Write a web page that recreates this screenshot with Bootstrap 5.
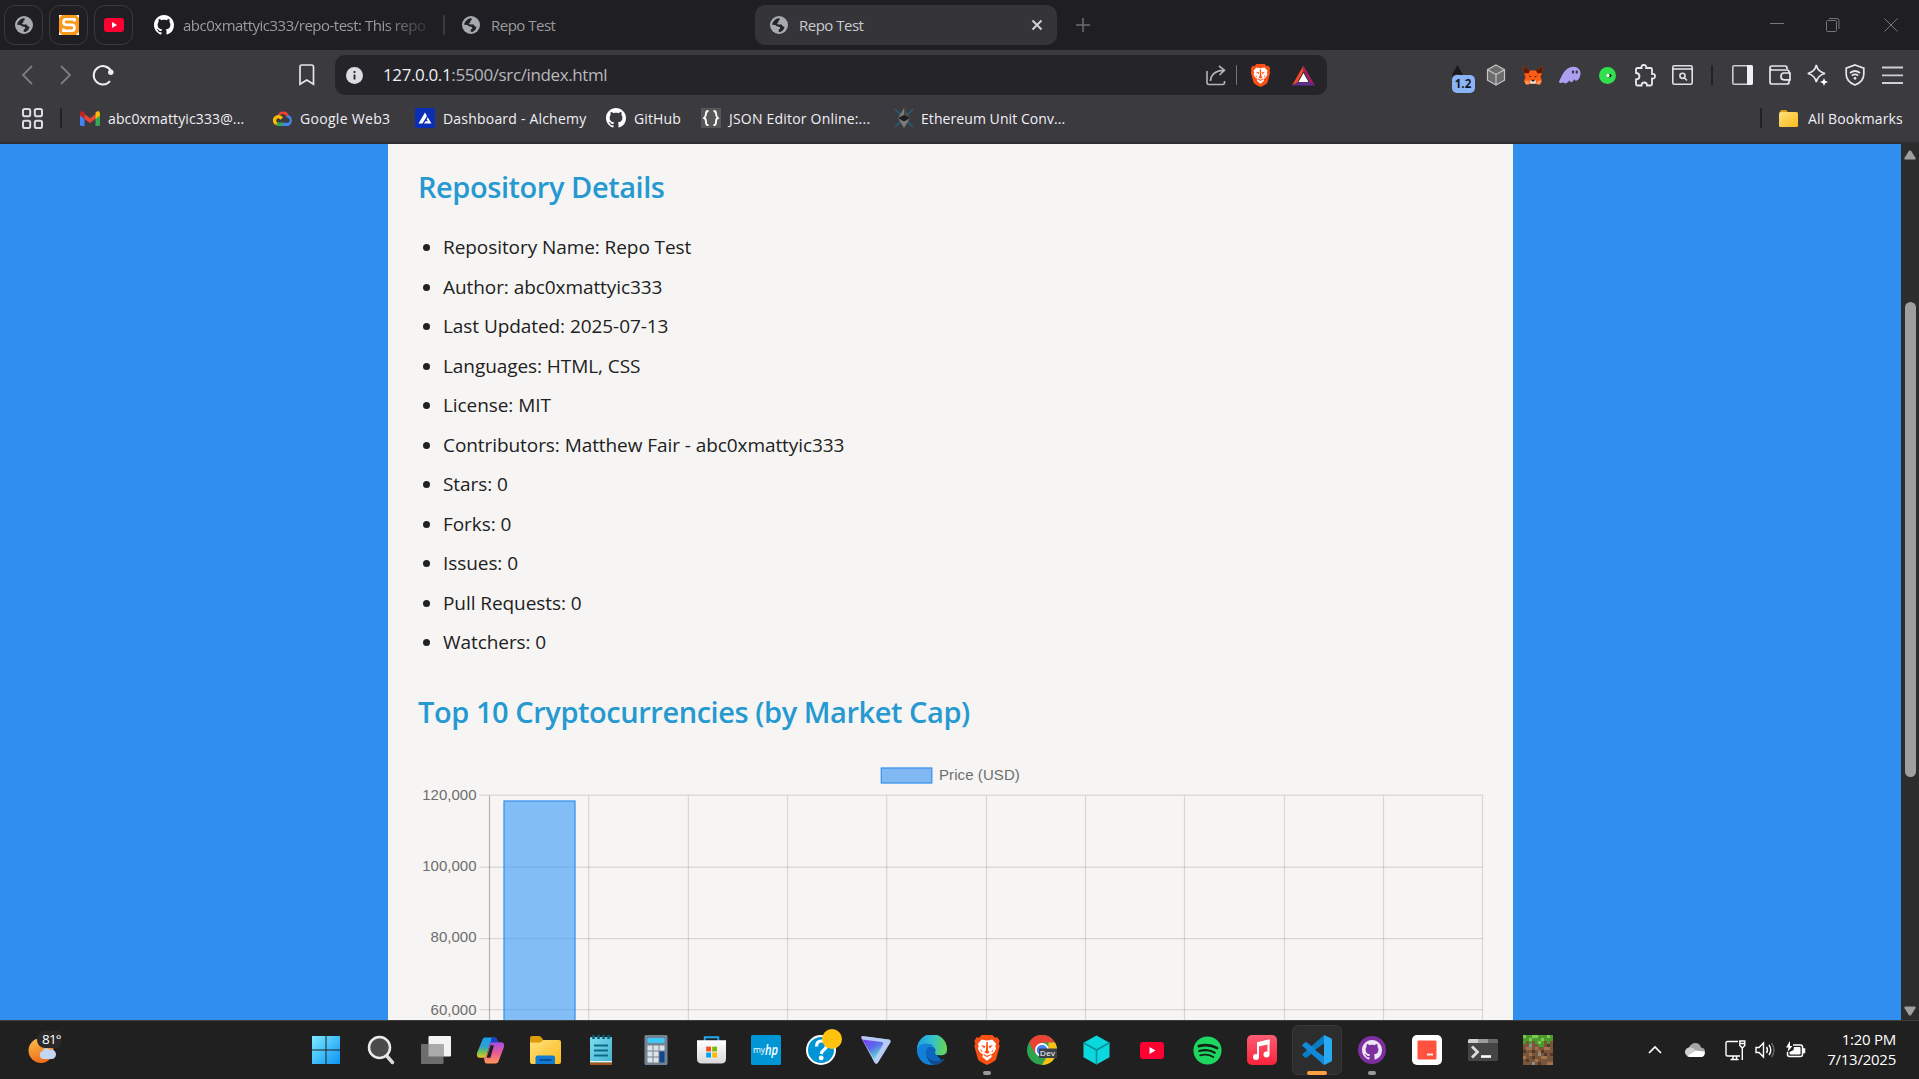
<!DOCTYPE html>
<html lang="en">
<head>
<meta charset="utf-8">
<title>Repo Test</title>
<link href="https://cdn.jsdelivr.net/npm/bootstrap@5.3.0/dist/css/bootstrap.min.css" rel="stylesheet">
<style>
html,body{height:100%}
body{font-family:"Open Sans","Noto Sans",sans-serif;background:#2f8eee;overflow:hidden;color:#212529}
svg{display:block;flex:none}
.tabstrip{height:50px;background:#1f1e23;padding:5px 0 0 4px}
.pin{width:39px;height:40px;border:1px solid #3a393f;border-radius:11px;margin-right:6px}
.tab-t{font-size:15px;line-height:39px;letter-spacing:-.5px;color:#9b9a9f;white-space:nowrap}
.tab-slot{height:40px}
.tab-on{width:302px;height:40px;border-radius:10px;background:#353439}
.tab-on .tab-t{color:#cbcacf}
.fade-r{-webkit-mask-image:linear-gradient(90deg,#000 200px,transparent 252px);mask-image:linear-gradient(90deg,#000 200px,transparent 252px)}
.vsep{width:2px;height:20px;border-radius:1px;background:#222126;flex:none}
.toolbar{height:50px;background:#3b3a3f}
.omnibox{width:992px;height:40px;border-radius:10px;background:#252429;color:#b9b8be;font-size:17px;letter-spacing:-.38px;white-space:nowrap}
.omnibox b{font-weight:400;color:#efeef4}
.ext{width:37.4px}
.ext-badge{left:12px;top:11px;width:23px;height:18px;border-radius:5px;background:#8ab4f8;color:#15161a;font-size:11.5px;font-weight:700;line-height:18px;text-align:center}
.bookbar{height:44px;background:#3b3a3f;border-bottom:2px solid #2e2d32;padding-bottom:6px;color:#f1f0f5;font-size:14px;letter-spacing:.12px;white-space:nowrap}
.bm{flex:none}
.page{height:876px;overflow:hidden}
.side{width:388px}
.sheet{width:1125px;background:#f6f5f4;padding:23px 25px 0 31px}
.sheet h2{font-size:29px;line-height:40px;font-weight:600;letter-spacing:-.44px;color:#2699d1;margin:0 0 21px -1px}
.sheet ul{margin:0 0 29px;padding-left:24px;font-size:19px;letter-spacing:-.07px;line-height:39.5px;color:#212121}
.scroller{width:18px;background:#2c2c2c;padding:6px 0 4px}
.thumb{width:11px;height:475px;border-radius:6px;background:#9f9f9f}
.taskbar{height:59px;background:#202020;border-top:1px solid #3e403e;color:#fff}
.task{width:55.1px;height:58px}
.task-on{width:50px;height:50px;border-radius:6px;background:#2d2d2d;border:1px solid #383838}
.run-dot{bottom:4px;left:50%;width:8px;height:4px;border-radius:2px;background:#9a9a9a;transform:translateX(-50%)}
.run-dot.wide{width:20px;background:#ff9f43}
.weather{width:298px;padding-left:28px}
.clock{font-size:15px;letter-spacing:-.25px;line-height:20px;width:90px;padding-bottom:3px}
.temp{font-size:13.5px;letter-spacing:-.8px;line-height:17px;left:37px;top:-6px;width:24px;background:#292929;border-radius:8px 4px 4px 8px;padding-left:5px}
</style>
</head>
<body class="d-flex flex-column m-0">
<svg width="0" height="0" class="position-absolute">
<symbol id="gh" viewBox="0 0 16 16"><path d="M8 0C3.58 0 0 3.58 0 8c0 3.54 2.29 6.53 5.47 7.59.4.07.55-.17.55-.38 0-.19-.01-.82-.01-1.49-2.01.37-2.53-.49-2.69-.94-.09-.23-.48-.94-.82-1.13-.28-.15-.68-.52-.01-.53.63-.01 1.08.58 1.23.82.72 1.21 1.87.87 2.33.66.07-.52.28-.87.51-1.07-1.78-.2-3.64-.89-3.64-3.95 0-.87.31-1.59.82-2.15-.08-.2-.36-1.02.08-2.12 0 0 .67-.21 2.2.82.64-.18 1.32-.27 2-.27s1.36.09 2 .27c1.53-1.04 2.2-.82 2.2-.82.44 1.1.16 1.92.08 2.12.51.56.82 1.27.82 2.15 0 3.07-1.87 3.75-3.65 3.95.29.25.54.73.54 1.48 0 1.07-.01 1.93-.01 2.2 0 .21.15.46.55.38A8.01 8.01 0 0 0 16 8c0-4.42-3.58-8-8-8z"/></symbol>
<symbol id="globe" viewBox="0 0 18 18"><circle cx="9" cy="9" r="9" fill="#a6aab0"/><path d="M3.600 5.200Q5.500 2.400 9.300 2.100L9.800 4 8.200 5 8.600 6.300 7 7.200Q7.200 8.600 9 8.400l2.600.2 1.200 1.700 1.800.8Q14.200 14 10.600 15.900l-2-.1.2-2.200 1.500-1-.4-1.600-2.300-.5Q6 9.600 5.200 8.900L2.100 8.800Q2.200 6.800 3.600 5.200Z" fill="#232227"/></symbol>
<symbol id="brave" viewBox="0 0 24 28"><path d="M7 0h10l2.500 2.600 2.200-.4L23.800 5.500 23 8l.8 2.400-3.400 12.400Q19.500 24.500 12 28 4.500 24.500 3.600 22.800L.2 10.400 1 8 .2 5.500 2.300 2.200l2.200.4z" fill="#fb4f14"/><path d="M7 4.300l5 .8 5-.8 3.500 3.800-.8 2.400.8 2.300-1.900 3.200-2.800 2.300.6 2.200L12 24l-4.400-3.500.6-2.200-2.800-2.300-1.900-3.200.8-2.300-.8-2.400z" fill="#fff"/><path d="M6.500 9.300l4 1-1 2.200zM17.500 9.300l-4 1 1 2.200zM11.300 6.500h1.400l.3 8 1.600 1.500L12 17.500 9.400 16l1.600-1.500zM8.500 17.400l3.500 1.900 3.500-1.900-.5 1.500-3 1.900-3-1.900zM5.500 12.500l2.500 3-1 .3zM18.500 12.500l-2.500 3 1 .3z" fill="#fb4f14"/></symbol>
<linearGradient id="gWin" x1="0" y1="0" x2="1" y2="1"><stop stop-color="#7deaff"/><stop offset="1" stop-color="#0a93f5"/></linearGradient>
<linearGradient id="gMoon" x1="0" y1="0" x2=".3" y2="1"><stop stop-color="#fbc04a"/><stop offset="1" stop-color="#f0701c"/></linearGradient>
<linearGradient id="gFold" x1="0" y1="0" x2="1" y2="1"><stop stop-color="#ffe07d"/><stop offset="1" stop-color="#fbbb1a"/></linearGradient>
<linearGradient id="gCopA" x1="0" y1="0" x2="0" y2="1"><stop stop-color="#18a0ee"/><stop offset=".45" stop-color="#2f9fd0"/><stop offset=".7" stop-color="#6bbf5a"/><stop offset="1" stop-color="#f2c220"/></linearGradient>
<linearGradient id="gCopB" x1="0" y1="0" x2="0" y2="1"><stop stop-color="#a24bea"/><stop offset=".5" stop-color="#ea5a96"/><stop offset="1" stop-color="#ff9a52"/></linearGradient>
<linearGradient id="gVpn" x1="0" y1="0" x2=".6" y2="1"><stop stop-color="#7a3ef0"/><stop offset=".5" stop-color="#5b6bea"/><stop offset="1" stop-color="#5fe8d0"/></linearGradient>
<linearGradient id="gEdge" x1="0" y1=".3" x2="1" y2=".4"><stop stop-color="#1f9ee0"/><stop offset=".5" stop-color="#33c0cf"/><stop offset="1" stop-color="#68d850"/></linearGradient>
<linearGradient id="gMusic" x1="0" y1="0" x2="0" y2="1"><stop stop-color="#fb5c74"/><stop offset="1" stop-color="#fa233b"/></linearGradient>
<linearGradient id="gBag" x1="0" y1="0" x2="0" y2="1"><stop stop-color="#fff"/><stop offset="1" stop-color="#d9d9d9"/></linearGradient>
<linearGradient id="gNote" x1="0" y1="0" x2="1" y2="1"><stop stop-color="#7fdcef"/><stop offset="1" stop-color="#3fb2cf"/></linearGradient>
</svg>

<header class="tabstrip d-flex flex-shrink-0 align-items-start">
  <div class="pin d-flex align-items-center justify-content-center"><svg width="18" height="20" viewBox="0 0 18 18"><use href="#globe"/></svg></div>
  <div class="pin d-flex align-items-center justify-content-center"><svg width="20" height="20" viewBox="0 0 20 20"><path fill="#fff" d="M0 0h20v20H0z"/><path d="M3 0h14l3 3v14l-3 3H3l-3-3V3z" fill="#f79a1b"/><path d="M15.500 6.600V4.200H7.200Q4.500 4.200 4.500 6.900T7.200 9.900h5.600q2.700 0 2.700 2.900t-2.700 3H4.500v-2.400" fill="none" stroke="#fff" stroke-width="2.600"/></svg></div>
  <div class="pin d-flex align-items-center justify-content-center"><svg width="20" height="14" viewBox="0 0 20 14"><rect width="20" height="14" rx="3" fill="#ff0033"/><path d="M8 4l5 3-5 3z" fill="#fff"/></svg></div>
  <div class="tab-slot d-flex align-items-center" style="width:306px;padding-left:15px"><svg width="20" height="20" fill="#fff"><use href="#gh"/></svg><span class="tab-t fade-r" style="margin-left:9px;width:252px">abc0xmattyic333/repo-test: This repo</span><i class="vsep ms-auto" style="background:#3b3a40"></i></div>
  <div class="tab-slot d-flex align-items-center" style="width:310px;padding-left:17px"><svg width="18" height="20" viewBox="0 0 18 18"><use href="#globe"/></svg><span class="tab-t" style="margin-left:11px">Repo Test</span></div>
  <div class="tab-on d-flex align-items-center"><svg style="margin-left:15px" width="18" height="20" viewBox="0 0 18 18"><use href="#globe"/></svg><span class="tab-t" style="margin-left:11px">Repo Test</span><svg class="ms-auto" style="margin-right:14px" width="12" height="12" viewBox="0 0 12 12" stroke="#d5d4da" stroke-width="1.900"><path d="M1.500 1.500l9 9M10.500 1.500l-9 9"/></svg></div>
  <svg style="margin:13px 0 0 19px" width="14" height="14" stroke="#6e6d73" stroke-width="1.500"><path d="M7 0v14M0 7h14"/></svg>
  <div class="d-flex align-items-center ms-auto tab-slot" style="margin-right:21px">
    <svg width="14" height="14" stroke="#77767b" stroke-width="1" style="margin-right:42px"><path d="M0 5.500h14"/></svg>
    <svg width="14" height="14" fill="none" stroke="#77767b" style="margin-right:44px"><rect x=".5" y="2.500" width="10" height="11" rx="1"/><path d="M3 .5h8q2 0 2 2V11"/></svg>
    <svg width="14" height="14" stroke="#77767b"><path d="M.5.5l13 13M13.500.5l-13 13"/></svg>
  </div>
</header>

<div class="toolbar d-flex align-items-center flex-shrink-0">
  <svg style="margin-left:21px" width="12" height="20" fill="none" stroke="#7d7c82" stroke-width="1.800"><path d="M11 1L2 10l9 9"/></svg>
  <svg style="margin-left:27px" width="12" height="20" fill="none" stroke="#7d7c82" stroke-width="1.800"><path d="M1 1l9 9-9 9"/></svg>
  <svg style="margin-left:20px" width="23" height="22" fill="none" stroke="#f0eff4" stroke-width="2"><path d="M19.300 7.500A9.200 9.200 0 1 0 18 17.200"/><circle cx="18.800" cy="8.300" r="2.700" fill="#f0eff4" stroke="none"/></svg>
  <svg style="margin-left:184px" width="16" height="22" fill="none" stroke="#e6e5ea" stroke-width="1.700"><path d="M1 3q0-2 2-2h9.500q2 0 2 2v17.300L7.800 16 1 20.300z"/></svg>
  <div class="omnibox d-flex align-items-center" style="margin-left:20px;padding-left:11px">
    <svg width="17" height="17"><circle cx="8.500" cy="8.500" r="8.500" fill="#dddce3"/><path d="M8.500 7.500v5M8.500 4v2" stroke="#252429" stroke-width="1.800"/></svg>
    <span style="margin-left:20px"><b>127.0.0.1</b>:5500/src/index.html</span>
    <svg class="ms-auto" width="21" height="21" fill="none" stroke="#b5b4ba" stroke-width="1.600"><path d="M1 6v11.500Q1 19.500 3 19.500h13.500q2 0 2-2V16M4.500 16Q5 6 17.500 5.200M13 1l5.500 4.200L13.500 10"/></svg>
    <i class="vsep" style="width:1px;background:#77767c;margin:0 13px 0 9px"></i>
    <svg width="21" height="23"><use href="#brave"/></svg>
    <svg style="margin:0 12px 0 21px" width="23" height="21" viewBox="0 0 24 21"><path d="M12 0L0 21l5.500-3.200L12 6z" fill="#ff4724"/><path d="M12 0l12 21-5.500-3.200L12 6z" fill="#9e1f63"/><path d="M0 21h24l-5.500-3.500h-13z" fill="#662d91"/><path d="M12 8l5.200 9.200H6.800z" fill="#fff"/></svg>
  </div>
  <div class="d-flex align-items-center" style="margin-left:112.500px">
    <div class="ext position-relative" style="height:22px"><svg width="37" height="22"><path d="M17.500 1L11.500 12l6-2 6 2z" fill="#19191d"/></svg><span class="ext-badge position-absolute">1.2</span></div>
    <div class="ext d-flex justify-content-center"><svg width="20" height="22" viewBox="0 0 20 22" stroke="#c4c4c4" stroke-width="1.200" fill="#6c6c6c"><path d="M10 1l8.500 4.700v10.500L10 21 1.500 16.200V5.700z"/><path d="M1.500 5.700L10 10.500l8.500-4.800M10 10.500V21" fill="none"/></svg></div>
    <div class="ext d-flex justify-content-center"><svg width="20" height="20" viewBox="0 0 20 20"><path d="M.5 1l6.500 4.500h6L19.500 1 19 8l-1.500 4 1.500 4-2 3.500-4.500-.5h-5L3 19.500 1 16l1.500-4L1 8z" fill="#ff5c16"/><path d="M.5 1L7 5.500l-1.500 3L1 8zM19.500 1L13 5.500l1.500 3L19 8z" fill="#661800"/><path d="M7 16l1-1h4l1 1-.5 2.500h-5z" fill="#eee"/><path d="M8.200 14.800h3.600l-.6 1.600H8.800zM5.500 10.500l3 1-.8 1zM14.500 10.500l-3 1 .8 1z" fill="#33180b"/><path d="M1.500 16l3.500-.5 2 3.500-4 .5zM18.500 16l-3.500-.5-2 3.500 4 .5z" fill="#ff9a5c"/></svg></div>
    <div class="ext d-flex justify-content-center"><svg width="22" height="18" viewBox="0 0 22 18"><path d="M.5 14.500C3 11 5 .8 14.500.8c4.500 0 7 3 7 6.500 0 4-2.500 7.500-4.500 7.500-1.300 0-1-1.500-1.500-1.500s-1.500 3-3.300 3c-1.500 0-.9-1.700-1.400-1.700S8.500 17.500 6 17.500c-1.600 0-1.500-1.500-1.500-1.500S2.800 17.500 1.200 17 0 15.200.5 14.500z" fill="#ab9ff2"/><ellipse cx="14" cy="6" rx="1.200" ry="1.800" fill="#3b3a3f"/><ellipse cx="17.700" cy="6" rx="1.200" ry="1.800" fill="#3b3a3f"/></svg></div>
    <div class="ext d-flex justify-content-center"><svg width="17" height="17"><circle cx="8.500" cy="8.500" r="8.500" fill="#30e04c"/><rect x="7.500" y="7" width="5" height="3.200" rx="1.600" fill="#111"/><circle cx="9" cy="8.500" r="1.700" fill="#fff"/></svg></div>
    <div class="ext d-flex justify-content-center"><svg width="22" height="23" fill="none" stroke="#e9e8ee" stroke-width="1.800"><path d="M2 5.500q0-1.500 1.500-1.500H7.500Q7 1 9.800 1t2.400 3h4.300q1.500 0 1.500 1.500V10q3-.5 3 2.200T18 14.500V20q0 1.500-1.500 1.500H13Q13 18.500 10.300 18.500T7.500 21.500h-4Q2 21.500 2 20V15.500q3.500-.3 3.500-3.300T2 9z"/></svg></div>
    <div class="ext d-flex justify-content-center"><svg width="21" height="20" fill="none" stroke="#e0dfe5" stroke-width="1.600"><rect x=".8" y=".8" width="19.400" height="18.400" rx="1.500"/><path d="M1 4h19"/><circle cx="10.500" cy="10.800" r="2.600"/><path d="M12.500 13l2.500 2.500"/></svg></div>
  </div>
  <i class="vsep" style="margin:0 11px 0 10px"></i>
  <div class="d-flex align-items-center">
    <div class="ext d-flex justify-content-center"><svg width="21" height="20"><rect x=".8" y=".8" width="19.400" height="18.400" rx="1.500" fill="none" stroke="#cccbd1" stroke-width="1.600"/><path d="M15 0h4q2 0 2 2v16q0 2-2 2h-4z" fill="#f0eff5"/></svg></div>
    <div class="ext d-flex justify-content-center"><svg width="22" height="20" fill="none" stroke="#e6e5eb" stroke-width="1.700"><path d="M18 4V3q0-2-2-2H3Q1 1 1 3v14q0 2 2 2h15q2 0 2-2v-2M1 3q0 2 2 2h15q2 0 2 2v1.500"/><path d="M21 8h-6q-3 0-3 3v.8q0 3 3 3h6z"/></svg></div>
    <div class="ext d-flex justify-content-center"><svg width="21" height="22" fill="none" stroke="#e6e5eb" stroke-width="1.600"><path d="M9.300 1q1.500 6.800 8.700 8.500-7.200 1.700-8.700 8.500Q7.800 11.200.8 9.500 7.800 7.800 9.300 1z"/><path d="M17 14l1.100 2.700L21 18l-2.900 1.300L17 22l-1.100-2.700L13 18l2.900-1.300z" fill="#fff" stroke="none"/></svg></div>
    <div class="ext d-flex justify-content-center"><svg width="20" height="22" fill="none" stroke="#e6e5eb" stroke-width="1.700"><path d="M10 1l8.800 3.200v6Q18.800 17.500 10 21 1.200 17.500 1.200 10.200v-6z"/><path d="M5 9q5-4 10 0M6.800 11.700q3.200-2.500 6.400 0"/><circle cx="10" cy="14.300" r="1" fill="#fff" stroke-width="1"/></svg></div>
    <div class="ext d-flex justify-content-center"><svg width="21" height="18" stroke="#d0cfd5" stroke-width="1.800"><path d="M0 1.500h21M0 9.300h21M0 17h21"/></svg></div>
  </div>
</div>

<nav class="bookbar d-flex align-items-center flex-shrink-0">
  <svg style="margin-left:22px" width="21" height="21" fill="none" stroke="#dddce2" stroke-width="2"><rect x="1" y="1" width="7.200" height="7.200" rx="1.800"/><rect x="12.800" y="1" width="7.200" height="7.200" rx="1.800"/><rect x="1" y="12.800" width="7.200" height="7.200" rx="1.800"/><rect x="12.800" y="12.800" width="7.200" height="7.200" rx="1.800"/></svg>
  <i class="vsep" style="margin:0 18px 0 17px"></i>
  <div class="bm d-flex align-items-center" style="width:193px"><svg width="20" height="15" viewBox="0 0 20 15"><path d="M0 2.500V13.500Q0 15 1.500 15H4.500V5z" fill="#4285f4"/><path d="M20 2.500V13.500Q20 15 18.500 15H15.500V5z" fill="#34a853"/><path d="M4.500 3l5.500 4.200L15.500 3v5L10 12 4.500 8z" fill="#ea4335"/><path d="M0 2.500Q.2 0 2 0q1 0 2.500 1.500V8L0 4.500z" fill="#c5221f"/><path d="M20 2.500Q19.800 0 18 0q-1 0-2.500 1.500V8L20 4.500z" fill="#fbbc04"/></svg><span style="margin-left:8px">abc0xmattyic333@...</span></div>
  <div class="bm d-flex align-items-center" style="width:142px"><svg width="20" height="16" viewBox="0 0 20 16"><path d="M4.500 5.500A6.200 6.200 0 0 1 15.800 5l-2.300 2A4 4 0 0 0 8 4.500z" fill="#ea4335"/><path d="M15.500 5A6 6 0 0 1 15 16h-5v-3.300h5a2.400 2.400 0 0 0 .5-4.500L13 7z" fill="#4285f4"/><path d="M10 16H5.500Q3.500 16 2.300 15l2.300-2.400h5.400z" fill="#34a853"/><path d="M2.300 15A5.500 5.500 0 1 1 10 7.500L7.500 9.800a2.200 2.200 0 1 0-2.600 2.900z" fill="#fbbc04"/></svg><span style="margin-left:7px;letter-spacing:.3px">Google Web3</span></div>
  <div class="bm d-flex align-items-center" style="width:191px"><svg width="20" height="20" viewBox="0 0 20 20"><rect width="20" height="20" rx="1.500" fill="#0a2fb4"/><path d="M10 4.500l2 3.500-4.500 7.500H3.500zM12.700 9.200l3.800 6.300H9l1.500-2.300h2.200l-1-2z" fill="#fff"/></svg><span style="margin-left:8px;letter-spacing:.2px">Dashboard - Alchemy</span></div>
  <div class="bm d-flex align-items-center" style="width:95px"><svg width="20" height="20" fill="#fff"><use href="#gh"/></svg><span style="margin-left:8px">GitHub</span></div>
  <div class="bm d-flex align-items-center" style="width:193px"><svg width="20" height="20" viewBox="0 0 20 20"><rect width="20" height="20" fill="#575757"/><path d="M7.500 3Q5 3 5 5.500T3.200 10Q5 10.500 5 14t2.500 3M12.500 3Q15 3 15 5.500T16.800 10Q15 10.500 15 14t-2.500 3" fill="none" stroke="#fff" stroke-width="1.900"/></svg><span style="margin-left:8px;letter-spacing:.2px">JSON Editor Online:...</span></div>
  <div class="bm d-flex align-items-center"><svg width="20" height="20" viewBox="0 0 20 20"><path d="M1 1l18 18M19 1L1 19" stroke="#1c6585" stroke-width="1.200"/><path d="M10 0l6 10-6 10L4 10z" fill="#7b7b7b"/><path d="M10 0l6 10-6 3z" fill="#4a4a4a"/><path d="M4 10l6-3 6 3-6 3.500z" fill="#1d1d1d"/></svg><span style="margin-left:7px;letter-spacing:.07px">Ethereum Unit Conv...</span></div>
  <div class="d-flex align-items-center ms-auto" style="width:159px"><i class="vsep"></i><svg style="margin:0 9px 0 17px" width="20" height="17" viewBox="0 0 20 17"><path d="M1 2Q1 0 3 0h4l2 2v3H1z" fill="#dd9f10"/><rect x="0" y="2" width="19" height="15" rx="1.500" fill="url(#gFold)"/></svg><span>All Bookmarks</span></div>
</nav>

<div class="page d-flex flex-shrink-0">
  <div class="side"></div>
  <main class="sheet">
    <h2>Repository Details</h2>
    <ul>
      <li>Repository Name: Repo Test</li>
      <li>Author: abc0xmattyic333</li>
      <li>Last Updated: 2025-07-13</li>
      <li>Languages: HTML, CSS</li>
      <li>License: MIT</li>
      <li>Contributors: Matthew Fair - abc0xmattyic333</li>
      <li>Stars: 0</li>
      <li>Forks: 0</li>
      <li>Issues: 0</li>
      <li>Pull Requests: 0</li>
      <li>Watchers: 0</li>
    </ul>
    <h2 class="mb-3">Top 10 Cryptocurrencies (by Market Cap)</h2>
    <svg width="1070" height="273" viewBox="419 747.500 1070 273" font-family="Liberation Sans, Arial, sans-serif" font-size="15" fill="#6d6d6c">
      <g stroke="#000" stroke-opacity=".12" stroke-width="1.250">
        <path d="M479.500 794.500H1483M479.500 866.500H1483M479.500 938H1483M479.500 1009.200H1483"/>
        <path d="M588.700 795V1020M688.400 795V1020M787.500 795V1020M886.700 795V1020M986.500 795V1020M1085.500 795V1020M1184.500 795V1020M1284.500 795V1020M1383.500 795V1020M1482.500 795V1020"/>
        <path d="M489.500 795V1020" stroke-opacity=".26"/>
      </g>
      <rect x="504" y="800.500" width="71" height="240" fill="#369af5" fill-opacity=".6" stroke="#3b94ee" stroke-width="1.300"/>
      <rect x="881.300" y="767.500" width="50.500" height="15" fill="#82b8f2" stroke="#3b94ee" stroke-width="1.300"/>
      <text x="939" y="779.300" letter-spacing=".08">Price (USD)</text>
      <g text-anchor="end"><text x="476.500" y="799">120,000</text><text x="476.500" y="870">100,000</text><text x="476.500" y="941.500">80,000</text><text x="476.500" y="1014">60,000</text></g>
    </svg>
  </main>
  <div class="scroller ms-auto d-flex flex-column align-items-center">
    <svg width="12" height="10" fill="#9f9f9f"><path d="M5 .8Q6 0 7 .8L11.600 8q.4 1.500-1 1.500H1.400Q0 9.500.4 8z"/></svg>
    <div class="thumb" style="margin-top:142px"></div>
    <svg class="mt-auto" width="12" height="10" fill="#9f9f9f"><path d="M5 9.200Q6 10 7 9.200L11.600 2q.4-1.500-1-1.500H1.400Q0 .5.400 2z"/></svg>
  </div>
</div>

<footer class="taskbar d-flex align-items-center flex-shrink-0">
  <div class="weather position-relative"><svg width="30" height="26" viewBox="0 0 30 26"><circle cx="13" cy="13.500" r="12.500" fill="url(#gMoon)"/><path d="M15 22a4.200 4.200 0 0 1-.5-8 4.500 4.500 0 0 1 7.500-1.200 4.500 4.500 0 0 1 2.500 9.200z" fill="#c3d6f4"/></svg><span class="temp position-absolute">81°</span></div>
  <div class="task d-flex align-items-center justify-content-center"><svg width="30" height="30"><path d="M1 1h13.500v13.500H1zM15.500 1H29v13.500H15.500zM1 15.500h13.500V29H1zM15.500 15.500H29V29H15.500z" fill="url(#gWin)"/></svg></div>
  <div class="task d-flex align-items-center justify-content-center"><svg width="28" height="30"><path d="M19 20l6.500 7.500" stroke="#d8dcde" stroke-width="3.500" stroke-linecap="round"/><circle cx="12.500" cy="12.500" r="10.500" fill="#4b4b4b" stroke="#e8eaeb" stroke-width="2.500"/></svg></div>
  <div class="task d-flex align-items-center justify-content-center"><svg width="30" height="30"><rect x="7.500" y="1" width="22.500" height="20.500" rx="1" fill="#f3f3f3"/><rect x="0" y="9" width="22.500" height="20" rx="1" fill="#6d6d6d"/><path d="M7.500 9h15v12.500h-15z" fill="#aaa"/></svg></div>
  <div class="task d-flex align-items-center justify-content-center"><svg width="29" height="29" viewBox="0 0 30 30"><path d="M7 3q.7-1.500 2.500-1.500H19q2 0 2.700 2l.8 3H17q-2 0-2.700 2L11 20q-.8 2.500-3 2.500H4Q0 22.500 1.200 17z" fill="url(#gCopA)"/><path d="M23 27q-.7 1.500-2.500 1.500H11q-2 0-2-2l-1-4q2 0 3-2.500L14.500 8q.7-1.500 2.500-1.500h9q4 0 2.800 5.500z" fill="url(#gCopB)"/><path d="M16 1.500h3q2 0 2.700 2l.8 3H17q-1 0-2 1z" fill="#1743c8"/><path d="M15 9.500h3.500l-3.500 13h-4z" fill="#202020"/></svg></div>
  <div class="task d-flex align-items-center justify-content-center"><svg width="31" height="28"><path d="M0 2Q0 0 2 0h7q1.500 0 2.500 1.500L14 5l-2 4H0z" fill="#dd9b08"/><path d="M0 6.500h9.500Q11 6.500 12 5q.8-1 2-1h15q2 0 2 2v20q0 2-2 2H2q-2 0-2-2z" fill="url(#gFold)"/><path d="M5.500 28v-6.500q0-2 2-2H23q2 0 2 2V28z" fill="#0f7bd2"/><path d="M9.500 24h12" stroke="#0b4b8f" stroke-width="1.800"/></svg></div>
  <div class="task d-flex align-items-center justify-content-center"><svg width="24" height="32" viewBox="0 0 24 32"><rect x="1" y="3" width="22" height="27" rx="1" fill="url(#gNote)"/><path d="M1 27h22v1.500H1z" fill="#eee"/><path d="M1 28.500h22V31H1z" fill="#a4571c"/><path d="M5 11.500h14M5 16.500h14M5 21.500h14" stroke="#0e6a88" stroke-width="2"/><path d="M4.500 1v4M9.500 1v4M14.500 1v4M19.500 1v4" stroke="#0e5c78" stroke-width="2.600"/></svg></div>
  <div class="task d-flex align-items-center justify-content-center"><svg width="24" height="30" viewBox="0 0 24 30"><rect x=".5" width="23" height="30" rx="1.500" fill="#748391"/><rect x="3.500" y="3" width="17" height="5" fill="#3dc8f5"/><path d="M3.500 10.500h5v5h-5zm6 0h5v5h-5zm6 0h5v5h-5zm-12 6h5v5h-5zm6 0h5v5h-5zm-6 6h5v5h-5zm6 0h5v5h-5z" fill="#dce3e8"/><path d="M15.500 16.500h5v11h-5z" fill="#10478c"/></svg></div>
  <div class="task d-flex align-items-center justify-content-center"><svg width="29" height="30" viewBox="0 0 30 30"><path d="M8 6V1.800h14V6" fill="none" stroke="#23a7ee" stroke-width="2"/><path d="M0 5h30v19q0 5-5 5H5q-5 0-5-5z" fill="url(#gBag)"/><path fill="#f25022" d="M9.500 11.500h5v5h-5z"/><path fill="#7fba00" d="M15.700 11.500h5v5h-5z"/><path fill="#00a4ef" d="M9.500 17.700h5v5h-5z"/><path fill="#ffb900" d="M15.700 17.700h5v5h-5z"/></svg></div>
  <div class="task d-flex align-items-center justify-content-center"><svg width="30" height="30"><rect width="30" height="30" rx="1.500" fill="#0096d6"/><text x="2" y="18" font-size="8.500" fill="#fff" font-family="Open Sans,sans-serif">my</text><text x="14" y="20" font-size="14" font-style="italic" font-weight="600" fill="#fff" font-family="Open Sans,sans-serif" textLength="13" lengthAdjust="spacingAndGlyphs">hp</text></svg></div>
  <div class="task d-flex align-items-center justify-content-center"><svg class="overflow-visible" width="30" height="30" viewBox="0 0 30 30"><circle cx="15" cy="15" r="14" fill="#0096d6" stroke="#fff" stroke-width="2"/><path d="M10.500 11.500q0-5.500 5-5.500t5 4.500q0 2.500-2.500 4.200T15.200 19" fill="none" stroke="#fff" stroke-width="3.200"/><circle cx="15.200" cy="23" r="2.400" fill="#fff"/><circle cx="26" cy="4" r="10" fill="#ffc20e"/></svg></div>
  <div class="task d-flex align-items-center justify-content-center"><svg width="30" height="30" viewBox="0 0 30 30"><path d="M1.800 1l26 3.500q2.500.5 1.500 3L17 27.500q-1.700 2.500-3.500 0L.3 3Q0 1 1.800 1z" fill="#c9b9ff"/><path d="M17 27.500q-1.700 2.500-3.500 0l-2-4L24 9.500l-22-5-.7-3.200 26.500 3.200q2.500.5 1.500 3z" fill="#a9d8f0" opacity=".6"/><path d="M1.200 4.500L20.500 7q2.500.5 1.300 2.800L13.300 24.500z" fill="url(#gVpn)"/></svg></div>
  <div class="task d-flex align-items-center justify-content-center"><svg width="30" height="30" viewBox="0 0 30 30"><circle cx="15" cy="15" r="15" fill="#0c66bf"/><path d="M0 14A15 15 0 0 1 30 14q0 6.500-6.500 6.500-5 0-5.800-2.500c2-2.500.8-6.500-4-6.500Q5 11.500 0 14z" fill="url(#gEdge)"/><path d="M0 15q2-6.500 9-6.500 5 0 8 2.800-7-1-8 5.200-1 9 8 12.800Q10 31 5 26.500T0 15z" fill="#1481d8"/><path d="M17.500 18q.8 2.500 6 2.500 3.500 0 6.500-2.500l1 3-5 5.500z" fill="#202020"/><path d="M9.500 15q-1.500 7 4.500 10t14.500-1.800Q24 30 17 30 9 27.500 9.500 15z" fill="#124a8d"/></svg></div>
  <div class="task position-relative d-flex align-items-center justify-content-center"><svg width="26" height="30"><use href="#brave"/></svg><i class="run-dot position-absolute"></i></div>
  <div class="task d-flex align-items-center justify-content-center"><svg width="30" height="30" viewBox="0 0 30 30"><circle cx="15" cy="15" r="15" fill="#2da44e"/><path d="M2 7.500A15 15 0 0 1 28 7.500H15L8.500 19z" fill="#ea4335"/><path d="M28 7.500A15 15 0 0 1 15 30l6.500-11.200V7.500z" fill="#fbc116"/><circle cx="15" cy="15" r="7" fill="#fff"/><circle cx="15" cy="15" r="5.300" fill="#4285f4"/><rect x="12" y="13.500" width="18" height="9.500" fill="#3a4148"/><text x="13" y="21.300" font-size="8" fill="#fff" font-family="Liberation Sans,sans-serif" textLength="15">Dev</text></svg></div>
  <div class="task d-flex align-items-center justify-content-center"><svg width="27" height="30" viewBox="0 0 28 30"><path d="M14 0l13.500 7.500v15L14 30 .5 22.500v-15z" fill="#0ad8dc"/><path d="M.5 7.500L14 15l13.500-7.500M14 15v15" stroke="#078f98" stroke-width="1.600" fill="none"/></svg></div>
  <div class="task d-flex align-items-center justify-content-center"><svg width="24" height="17" viewBox="0 0 24 17"><rect width="24" height="17" rx="3" fill="#ff0033"/><path d="M9.500 5l6 3.500-6 3.500z" fill="#fff"/></svg></div>
  <div class="task d-flex align-items-center justify-content-center"><svg width="29" height="29" viewBox="0 0 30 30" fill="none" stroke="#10231a" stroke-linecap="round"><circle cx="15" cy="15" r="14.500" fill="#1ed760" stroke="none"/><path d="M6 10.500q10-3 19 2" stroke-width="2.800"/><path d="M6.500 15.500q9-2.500 16 1.800" stroke-width="2.300"/><path d="M7.500 20q7-2 13.500 1.700" stroke-width="2"/></svg></div>
  <div class="task d-flex align-items-center justify-content-center"><svg width="30" height="30"><rect width="30" height="30" rx="5" fill="url(#gMusic)"/><path d="M11 22V8l10.500-2.500V19" fill="none" stroke="#fff" stroke-width="2"/><path d="M10.500 7.500L22.500 4.800V9l-12 2.700z" fill="#fff"/><circle cx="9" cy="22" r="3" fill="#fff"/><circle cx="19.500" cy="19.500" r="3" fill="#fff"/></svg></div>
  <div class="task position-relative d-flex align-items-center justify-content-center"><div class="task-on d-flex align-items-center justify-content-center"><svg width="30" height="30" viewBox="0 0 30 30"><path d="M22 0v9L5 22.500q-1 .8-2 0L.8 20.700q-1-1 0-2z" fill="#0a7cc4"/><path d="M.8 11.300q-1-1 0-2L3 7.500q1-.8 2 0L22 21v9z" fill="#1289d8"/><path d="M22 0l7 3.200q1 .5 1 2v19.600q0 1.500-1 2L22 30z" fill="#29a9f2"/><path d="M22 8.500v13L13 15z" fill="#2d2d2d"/></svg></div><i class="run-dot wide position-absolute"></i></div>
  <div class="task position-relative d-flex align-items-center justify-content-center"><svg width="28" height="28" viewBox="0 0 28 28"><circle cx="14" cy="14" r="14" fill="#7d2fa0"/><svg x="4" y="4" width="20" height="20" fill="#eee6f3"><use href="#gh"/></svg></svg><i class="run-dot position-absolute"></i></div>
  <div class="task d-flex align-items-center justify-content-center"><svg width="30" height="30"><rect width="30" height="30" rx="5" fill="#fff"/><rect x="5.500" y="5.500" width="19" height="19" rx="1" fill="#ff5340"/><path d="M15 19.500h6" stroke="#fff" stroke-width="1.800"/></svg></div>
  <div class="task d-flex align-items-center justify-content-center"><svg width="30" height="22"><rect width="30" height="22" rx="1.500" fill="#454545"/><path d="M0 4V1.500Q0 0 1.500 0H10v4z" fill="#d0d0d0"/><path d="M10 0h10v4H10z" fill="#9b9b9b"/><path d="M20 0h8.500Q30 0 30 1.500V4H20z" fill="#6a6a6a"/><path d="M4 7.500l5.500 5.500L4 18.500" fill="none" stroke="#dcdcdc" stroke-width="2.800"/><path d="M13 17.500h10" stroke="#fff" stroke-width="2.600"/></svg></div>
  <div class="task d-flex align-items-center justify-content-center"><svg width="30" height="30" viewBox="0 0 10 10" shape-rendering="crispEdges"><path fill="#79553a" d="M0 0h10v10H0z"/><path fill="#4c9a2f" d="M0 0h10v2H9v1H8V2H7v2H5V3H4V2H3v1H2V2H1v1H0z"/><path fill="#7bc94f" d="M0 0h1v1H0zM2 1h1v1H2zM3 0h2v1H3zM6 1h1v1H6zM8 0h1v1H8zM5 2h1v1H5z"/><path fill="#a2734c" d="M1 4h2v1H1zM4 4h1v1H4zM7 4h2v1H7zM2 6h1v1H2zM6 7h2v1H6zM0 7h1v1H0zM8 9h2v1H8zM4 8h1v1H4zM5 5h1v1H5z"/><path fill="#54382a" d="M0 5h1v1H0zM3 5h1v1H3zM6 5h1v1H6zM9 6h1v1H9zM1 8h1v1H1zM5 9h1v1H5zM3 7h1v1H3zM7 6h1v1H7zM8 3h1v1H8z"/><path fill="#8e8e8e" d="M2 3h1v1H2zM5 6h1v1H5zM3 9h1v1H3z"/></svg></div>
  <div class="ms-auto d-flex align-items-center" style="margin-right:23px">
    <svg width="14" height="10" fill="none" stroke="#fff" stroke-width="1.700" style="margin-right:23px"><path d="M1 8l6-6 6 6"/></svg>
    <svg width="20" height="14" viewBox="0 0 20 14" style="margin-right:20px"><path d="M3.500 12Q0 11 .3 8T4 4.500Q6 0 10.500 0T16 4.500q4 .3 4 4.500t-4 5H5z" fill="#a5a5a5"/><path d="M4 4.500q3-1 7 3L2 13Q0 11.500 0 9t4-4.500z" fill="#cfcfcf"/><path d="M2 13l9-5.500 8.500 1Q20.500 14 16 14H5Q3 14 2 13z" fill="#fff"/></svg>
    <svg width="21" height="21" fill="none" stroke="#fff" stroke-width="1.400" style="margin-right:9px"><path d="M13 1.500H2.500Q1 1.500 1 3v11.500Q1 16 2.500 16H15M5.500 19.500h8M8 16v3.500M11.500 16v3.500M17.300 8v12"/><path d="M14.800 1h5v4.500l-2.500 2.500-2.500-2.500zM15 3.500h5"/></svg>
    <svg width="21" height="18" fill="none" stroke="#fff" stroke-width="1.400" style="margin-right:9px"><path d="M1 6.500h3L8.500 2v14L4 11.500H1zM11.500 6q2 3 0 6M14 3.800q3.500 5.200 0 10.400"/><path d="M16.500 2q5 7 0 14" stroke="#666"/></svg>
    <svg width="21" height="18" fill="none" stroke="#fff" stroke-width="1.500"><path d="M8 4h7.500q2 0 2 2v7.500q0 2-2 2h-11q-2 0-2-2V11"/><path d="M18 8h1.500v3.500H18z"/><path d="M9 6h5.500q1 0 1 1v5.500q0 1-1 1h-9q-1 0-1-1V11L8.500 9z" fill="#fff" stroke="none"/><path d="M5 0L1 6.500h2.500L2.500 11 7.500 5H5z" fill="#fff" stroke="none"/></svg>
    <div class="clock text-end"><div>1:20 PM</div><div>7/13/2025</div></div>
  </div>
</footer>
<script src="https://cdn.jsdelivr.net/npm/bootstrap@5.3.0/dist/js/bootstrap.bundle.min.js"></script>
</body>
</html>
